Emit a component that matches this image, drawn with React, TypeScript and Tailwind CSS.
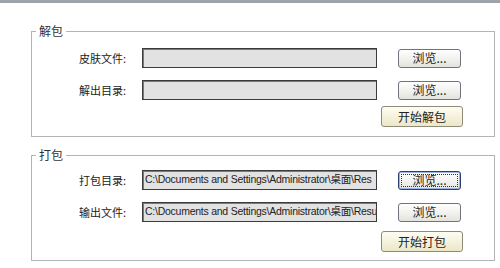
import React from 'react'

const font = { fontFamily: '"Noto Sans CJK SC", "Liberation Sans", sans-serif' }

function BrowseButton({ focused = false }: { focused?: boolean }) {
  if (focused) {
    return (
      <button className="ml-[21px] h-[19px] w-[63px] rounded-[3px] border border-[#2c3f73] bg-gradient-to-b from-[#ffffff] to-[#e6e6e0] p-[2px] text-[12px] leading-none text-[#222] shadow-[inset_0_0_0_1px_#9db3e0]">
        <span className="flex h-full w-full items-center justify-center border border-dotted border-[#333]">浏览...</span>
      </button>
    )
  }
  return (
    <button className="ml-[21px] h-[19px] w-[63px] rounded-[3px] border border-[#6f747c] bg-gradient-to-b from-[#ffffff] to-[#e4e4de] text-[12px] leading-none text-[#222]">
      浏览...
    </button>
  )
}

function Row({ label, value, focused }: { label: string; value?: string; focused?: boolean }) {
  return (
    <div className="flex items-center">
      <div className="w-[94px] text-right text-[11px] text-[#222]">{label}</div>
      <div className="ml-[16px] flex h-[20px] w-[235px] items-start overflow-hidden whitespace-nowrap border border-[#3c3c3c] bg-[#e2e2e2] pl-[2px] pt-[1px] text-[10.5px] tracking-[-0.25px] text-[#222] shadow-[inset_1px_1px_0_#7a7a7a]" style={{ fontFamily: '"Liberation Sans", "Noto Sans CJK SC", sans-serif' }}>
        {value}
      </div>
      <BrowseButton focused={focused} />
    </div>
  )
}

function ActionButton({ text }: { text: string }) {
  return (
    <div className="flex justify-end pr-[31px]">
      <button className="h-[21px] w-[82px] rounded-[3px] border border-[#8c8c78] bg-gradient-to-b from-[#fefdf2] to-[#ece7c8] text-[12px] leading-none text-[#222]">
        {text}
      </button>
    </div>
  )
}

export default function App() {
  return (
    <div className="h-[268px] w-[500px] overflow-hidden bg-white" style={font}>
      <div className="h-[3px] bg-[#9ea2aa]" />

      {/* 解包 */}
      <div className="relative ml-[31px] mt-[28px] h-[106px] w-[464px] border border-[#b4b4b4] pt-[16px]">
        <span className="absolute -top-[9px] left-[4px] bg-white px-[3px] text-[12px] leading-[16px] text-[#333]">解包</span>
        <div className="flex flex-col gap-[12px]">
          <Row label="皮肤文件:" />
          <Row label="解出目录:" />
        </div>
        <div className="mt-[6px]">
          <ActionButton text="开始解包" />
        </div>
      </div>

      {/* 打包 */}
      <div className="relative ml-[31px] mt-[18px] h-[106px] w-[464px] border border-[#b4b4b4] pt-[14px]">
        <span className="absolute -top-[9px] left-[4px] bg-white px-[3px] text-[12px] leading-[16px] text-[#333]">打包</span>
        <div className="flex flex-col gap-[12px]">
          <Row label="打包目录:" value="C:\Documents and Settings\Administrator\桌面\Res" focused />
          <Row label="输出文件:" value="C:\Documents and Settings\Administrator\桌面\Results" />
        </div>
        <div className="mt-[9px]">
          <ActionButton text="开始打包" />
        </div>
      </div>
    </div>
  )
}
